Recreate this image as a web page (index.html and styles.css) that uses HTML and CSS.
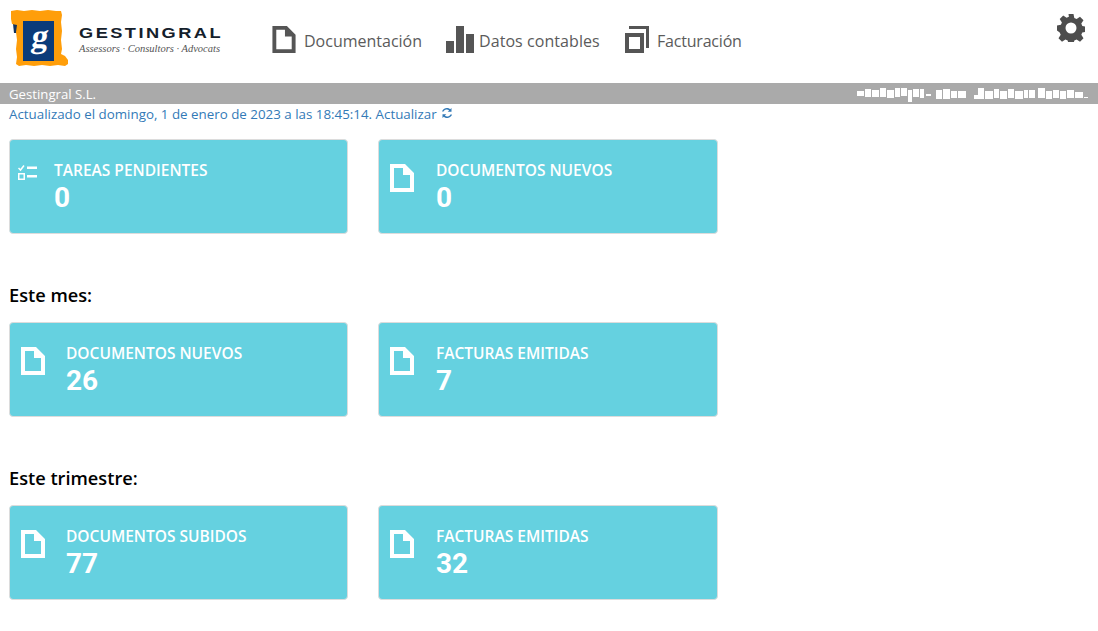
FILE: index.html
```html
<!DOCTYPE html>
<html lang="es">
<head>
    <meta charset="UTF-8">
    <meta name="viewport" content="width=device-width, initial-scale=1.0">
    <title>Gestingral</title>
    <link rel="stylesheet" href="styles.css">
</head>
<body>
    <svg class="sprites" width="0" height="0">
        <symbol id="doc" viewBox="0 0 24 28">
            <path fill-rule="evenodd" d="M0 0H15L24 9V28H0ZM4 4V24H20V11H13V4Z"/>
        </symbol>
    </svg>

    <header class="topbar">
        <a class="brand" href="#">
            <svg class="brand-mark" viewBox="0 0 60 60" width="60" height="60">
                <path class="mark-dark" d="M4 15h5v9H5z"/>
                <path class="mark-orange" d="M2 2l6-1 7 1 8-1 8 1 8-1 8 1 5 0 1 4-1 7 1 9-1 9 1 9-1 5 4 2 3 4 0 4-3 2-7-1-8 1-8-1-8 1-8-1-7 1-3-2 1-7-1-8 1-9-1-8 1-7-5-1-1-5z"/>
                <rect class="mark-navy" x="14" y="12" width="31" height="40"/>
                <text class="mark-letter" x="35" y="38" text-anchor="middle" transform="skewX(-8)">g</text>
            </svg>
            <span class="brand-text">
                <span class="brand-name">GESTINGRAL</span>
                <span class="brand-sub">Assessors · Consultors · Advocats</span>
            </span>
        </a>
        <nav class="nav">
            <a class="nav-item nav-doc" href="#">
                <svg class="nav-icon" width="24" height="27"><use href="#doc"/></svg>
                Documentación
            </a>
            <a class="nav-item nav-data" href="#">
                <svg class="nav-icon" viewBox="0 0 28 27" width="28" height="27">
                    <rect x="0" y="15" width="8" height="12"/>
                    <rect x="10" y="0" width="8" height="27"/>
                    <rect x="20" y="8" width="8" height="19"/>
                </svg>
                Datos contables
            </a>
            <a class="nav-item nav-bill" href="#">
                <svg class="nav-icon" viewBox="0 0 24 27" width="24" height="27">
                    <path fill-rule="evenodd" d="M0 7H19V27H0ZM4 11V23H15V11Z"/>
                    <path d="M4 0H24V22H21V3H4Z"/>
                </svg>
                Facturación
            </a>
        </nav>
        <a class="settings" href="#">
            <svg viewBox="0 0 28 28" width="28" height="28">
                <path fill-rule="evenodd" d="M11.5 0h5l.8 3.900 2.300 1 3.400-2.200 3.500 3.500-2.200 3.400 1 2.300 3.900.8v5l-3.900.8-1 2.300 2.200 3.400-3.500 3.500-3.400-2.200-2.300 1-.8 3.900h-5l-.8-3.900-2.300-1-3.400 2.200-3.500-3.500 2.200-3.400-1-2.300L0 16.500v-5l3.900-.8 1-2.300L2.700 5 6.200 1.500l3.400 2.200 2.300-1zM14 8.500a5.500 5.500 0 1 0 0 11 5.500 5.500 0 0 0 0-11z"/>
            </svg>
        </a>
    </header>

    <div class="company-bar">
        <span>Gestingral S.L.</span>
        <svg class="masked" viewBox="0 0 232 16" width="232" height="16">
            <path d="M1 5h7v5H1zM9 3h6v8H9zM16 4h7v7h-7zM24 2h6v9h-6zM31 4h7v8h-7zM39 2h5v9h-5zM45 2h6v8h-6zM52 4h4v12h-4zM57 3h6v8h-6zM64 3h4v9h-4zM70 8h5v2h-5zM80 4h6v9h-6zM87 3h7v10h-7zM95 5h6v7h-6zM102 5h8v7h-8zM118 9h4v4h-4zM122 2h6v11h-6zM129 5h8v8h-8zM138 3h5v9h-5zM144 5h7v8h-7zM152 3h6v9h-6zM159 5h8v8h-8zM168 4h4v8h-4zM173 4h6v8h-6zM182 2h7v10h-7zM190 5h6v8h-6zM197 4h6v8h-6zM204 5h6v8h-6zM211 4h7v8h-7zM219 6h8v6h-8zM228 11h4v1h-4z"/>
        </svg>
    </div>

    <main class="content">
        <p class="updated">
            Actualizado el domingo, 1 de enero de 2023 a las 18:45:14. Actualizar
            <svg class="refresh" viewBox="0 0 12 12" width="12" height="12">
                <path d="M10.500 1v3.800H6.700l1.400-1.400A3.500 3.500 0 0 0 2.500 4.600H1A5 5 0 0 1 9.200 2.300zM1.500 11V7.200h3.800L3.900 8.600a3.500 3.500 0 0 0 5.600-1.200H11a5 5 0 0 1-8.200 2.300z"/>
            </svg>
        </p>

        <section class="cards first">
            <div class="card card-tasks">
                <svg class="card-icon" viewBox="0 0 19 15" width="19" height="15">
                    <path class="tick" d="M.5 3l2 2L6 .5"/>
                    <path d="M9 1.500h10v2.500H9zM9 10h10v2.500H9z"/>
                    <path fill-rule="evenodd" d="M0 8h7v7H0zM1.500 9.500v4h4v-4z"/>
                </svg>
                <div>
                    <div class="card-title">TAREAS PENDIENTES</div>
                    <div class="card-value">0</div>
                </div>
            </div>
            <div class="card">
                <svg class="card-icon" width="24" height="28"><use href="#doc"/></svg>
                <div>
                    <div class="card-title">DOCUMENTOS NUEVOS</div>
                    <div class="card-value">0</div>
                </div>
            </div>
        </section>

        <h2 class="period">Este mes:</h2>
        <section class="cards">
            <div class="card">
                <svg class="card-icon" width="24" height="28"><use href="#doc"/></svg>
                <div>
                    <div class="card-title">DOCUMENTOS NUEVOS</div>
                    <div class="card-value">26</div>
                </div>
            </div>
            <div class="card">
                <svg class="card-icon" width="24" height="28"><use href="#doc"/></svg>
                <div>
                    <div class="card-title">FACTURAS EMITIDAS</div>
                    <div class="card-value">7</div>
                </div>
            </div>
        </section>

        <h2 class="period">Este trimestre:</h2>
        <section class="cards">
            <div class="card">
                <svg class="card-icon" width="24" height="28"><use href="#doc"/></svg>
                <div>
                    <div class="card-title">DOCUMENTOS SUBIDOS</div>
                    <div class="card-value">77</div>
                </div>
            </div>
            <div class="card">
                <svg class="card-icon" width="24" height="28"><use href="#doc"/></svg>
                <div>
                    <div class="card-title">FACTURAS EMITIDAS</div>
                    <div class="card-value">32</div>
                </div>
            </div>
        </section>
    </main>
</body>
</html>
```

FILE: styles.css
```css
* {
    margin: 0;
    padding: 0;
    box-sizing: border-box;
}

body {
    font-family: "Open Sans", "Noto Sans", sans-serif;
    background-color: #fff;
    overflow: hidden;
}

a {
    text-decoration: none;
    color: inherit;
}

.sprites {
    display: block;
    height: 0;
}

.topbar {
    display: flex;
    align-items: flex-start;
    height: 83px;
}

.brand {
    display: flex;
    width: 272px;
    padding: 9px 0 0 9px;
}

.brand-mark {
    flex: none;
}

.mark-dark {
    fill: #12325f;
}

.mark-orange {
    fill: #ff9e0a;
}

.mark-navy {
    fill: #0b3b7a;
}

.mark-letter {
    font-family: "Liberation Serif", serif;
    font-weight: bold;
    font-size: 33px;
    fill: #fff;
}

.brand-text {
    display: flex;
    flex-direction: column;
    margin: 17px 0 0 10px;
}

.brand-name {
    font-family: "Liberation Sans", sans-serif;
    font-weight: bold;
    font-size: 14px;
    line-height: 15px;
    letter-spacing: 1.900px;
    color: #14202b;
    white-space: nowrap;
    transform: scaleX(1.3);
    transform-origin: left;
}

.brand-sub {
    font-family: "Liberation Serif", serif;
    font-style: italic;
    font-size: 10.500px;
    line-height: 14px;
    margin-top: 1px;
    color: #555;
    white-space: nowrap;
}

.nav {
    display: flex;
    margin-top: 26px;
}

.nav-item {
    display: flex;
    align-items: flex-end;
    height: 27px;
    font-size: 16px;
    line-height: 23px;
    color: #5b5b5b;
    white-space: nowrap;
}

.nav-icon {
    flex: none;
    fill: #555;
}

.nav-doc .nav-icon {
    margin-right: 8px;
}

.nav-doc {
    width: 174px;
}

.nav-data .nav-icon {
    margin-right: 5px;
}

.nav-data {
    width: 179px;
    letter-spacing: .07px;
}

.nav-bill {
    letter-spacing: -.2px;
}

.nav-bill .nav-icon {
    margin-right: 8px;
}

.settings {
    margin: 14px 13px 0 auto;
    height: 28px;
    fill: #4d4d4d;
}

.company-bar {
    display: flex;
    justify-content: space-between;
    align-items: center;
    height: 21px;
    padding: 0 10px 0 9px;
    background-color: #aaa;
    color: #fff;
    font-size: 13.200px;
}

.masked {
    fill: #fff;
}

.content {
    padding: 0 0 0 9px;
}

.updated {
    height: 35px;
    padding-top: 1px;
    font-size: 13.350px;
    line-height: 18px;
    color: #337ab7;
}

.refresh {
    fill: #337ab7;
    margin-left: 1px;
}

.cards {
    display: grid;
    grid-template-columns: 339px 340px;
    column-gap: 30px;
}

.card {
    display: flex;
    align-items: flex-start;
    height: 95px;
    padding: 20px 0 0 11px;
    background-color: #65d1e0;
    border: 1px solid #dcdcdc;
    border-radius: 4px;
    color: #fff;
}

.card-icon {
    flex: none;
    fill: #fff;
    margin: 4px 21px 0 0;
}

.card + .card .card-icon {
    margin-right: 22px;
}

.card-tasks {
    padding-left: 8px;
}

.card-tasks .card-icon {
    margin: 5px 17px 0 0;
}

.tick {
    fill: none;
    stroke: #fff;
    stroke-width: 1.500;
}

.card-title {
    font-size: 15.500px;
    font-weight: 600;
    line-height: 20px;
}

.card-value {
    font-family: Roboto, "Open Sans", sans-serif;
    font-size: 28px;
    font-weight: 700;
    line-height: 32px;
    margin-top: 2px;
}

.period {
    height: 88px;
    padding-top: 49px;
    font-size: 18.200px;
    font-weight: 600;
    line-height: 24px;
    color: #000;
}
```
